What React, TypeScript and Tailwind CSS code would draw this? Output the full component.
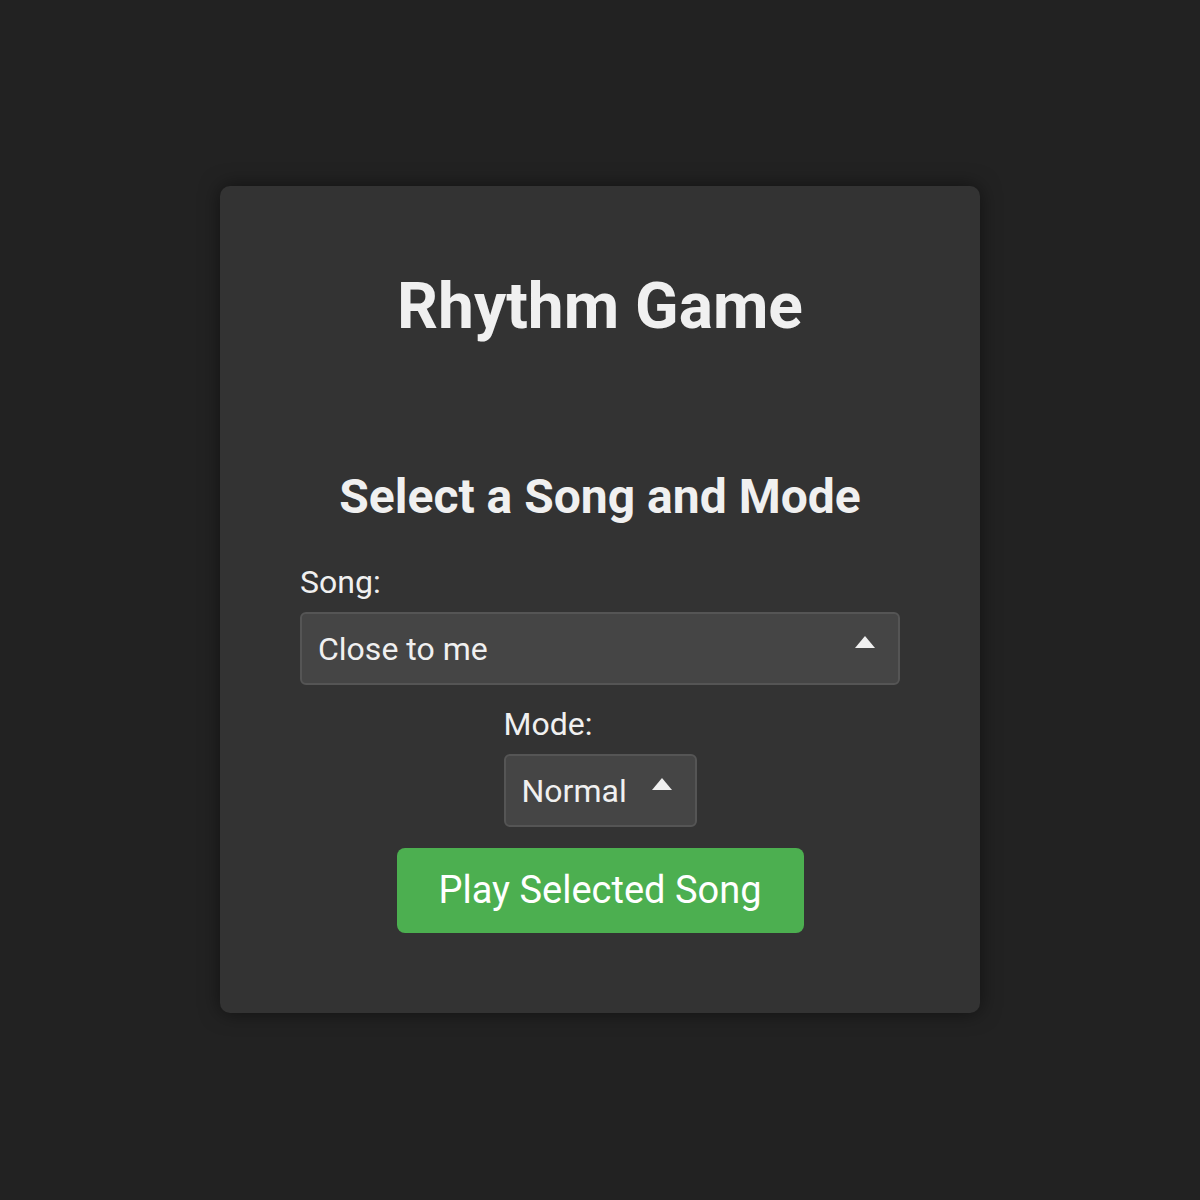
const songs = ["Close to me", "Moonlight Drive", "Neon Nights"];
const modes = ["Normal", "Hard"];

function Caret() {
  return (
    <svg
      width="20"
      height="12"
      viewBox="0 0 20 12"
      className="absolute right-[25px] top-1/2 -translate-y-[13px]"
    >
      <path d="M10 0 L20 12 L0 12 Z" fill="#f0f0f0" />
    </svg>
  );
}

export default function App() {
  return (
    <div
      className="min-h-[1200px] bg-[#222222] pt-[186px] text-[#f0f0f0]"
      style={{ fontFamily: "Roboto, 'Liberation Sans', sans-serif" }}
    >
      <div className="mx-auto flex w-[760px] flex-col items-center rounded-[10px] bg-[#333333] px-[80px] pb-[80px] pt-[89px] shadow-[0_0_20px_rgba(0,0,0,0.5)]">
        <h1 className="text-[64px] font-bold leading-none">Rhythm Game</h1>

        <h2 className="mt-[134px] text-[48px] font-bold leading-none">Select a Song and Mode</h2>

        <div className="mt-[41px] flex w-full flex-col">
          <label className="text-[32px] leading-[40px]">Song:</label>
          <div className="relative mt-[10px]">
            <div className="flex h-[73px] w-full items-center rounded-[6px] border-2 border-[#555555] bg-[#454545] pl-[16px] text-[32px]">
              {songs[0]}
            </div>
            <Caret />
          </div>
        </div>

        <div className="mt-[19px] flex flex-col">
          <label className="text-[32px] leading-[40px]">Mode:</label>
          <div className="relative mt-[10px]">
            <div className="flex h-[73px] w-[193px] items-center rounded-[6px] border-2 border-[#555555] bg-[#454545] pl-[16px] text-[32px]">
              {modes[0]}
            </div>
            <Caret />
          </div>
        </div>

        <button className="mt-[21px] h-[85px] w-[407px] rounded-[8px] bg-[#4caf50] text-[38px] text-white">
          Play Selected Song
        </button>
      </div>
    </div>
  );
}
